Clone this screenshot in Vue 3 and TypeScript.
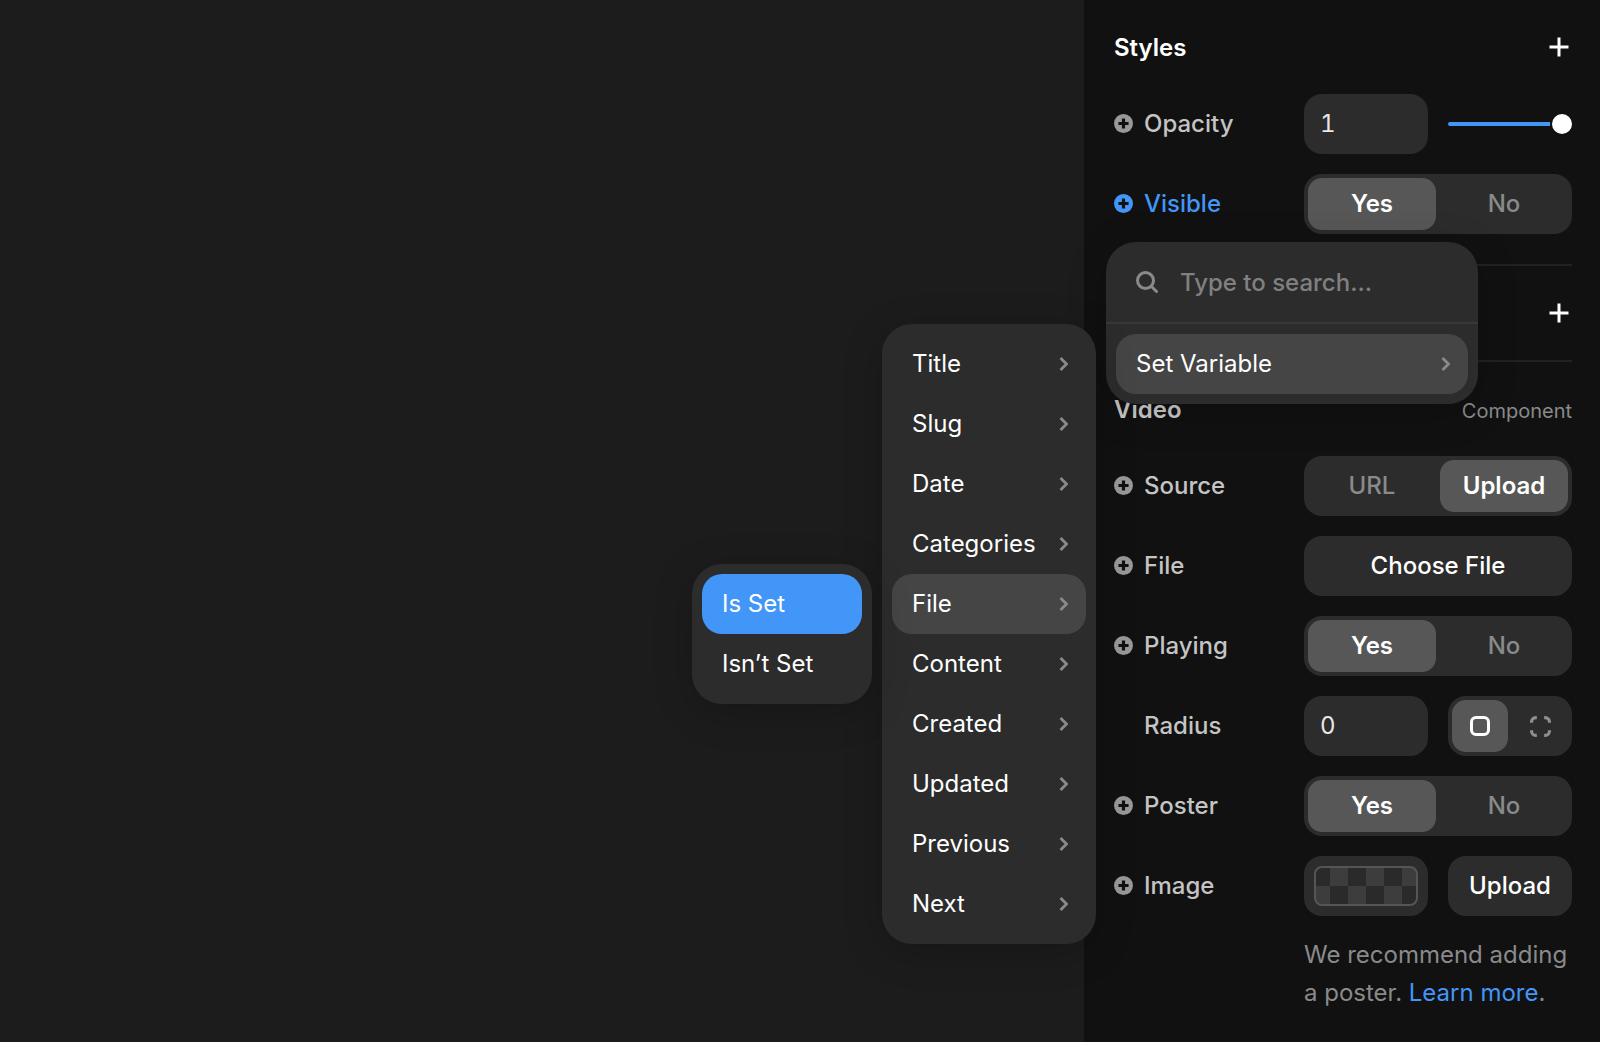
<template>
  <div class="app">
    <div class="canvas"></div>

    <aside class="panel">
      <section class="section">
        <header class="section-head">
          <h2>Styles</h2>
          <svg class="add" viewBox="0 0 20 20"><path d="M10 0.5v19M0.5 10h19" /></svg>
        </header>
        <div class="rows">
          <div class="row">
            <label class="label">
              <svg class="dot" viewBox="0 0 18 18"><circle cx="9" cy="9" r="9" /><path d="M9 4.2v9.6M4.2 9h9.6" /></svg>
              <span class="txt">Opacity</span>
            </label>
            <div class="split">
              <input class="field" value="1" />
              <div class="slider"><span class="thumb"></span></div>
            </div>
          </div>
          <div class="row blue">
            <label class="label">
              <svg class="dot" viewBox="0 0 18 18"><circle cx="9" cy="9" r="9" /><path d="M9 4.2v9.6M4.2 9h9.6" /></svg>
              <span class="txt">Visible</span>
            </label>
            <div class="segment">
              <span class="seg on">Yes</span>
              <span class="seg">No</span>
            </div>
          </div>
        </div>
      </section>

      <section class="section">
        <header class="section-head">
          <h2></h2>
          <svg class="add" viewBox="0 0 20 20"><path d="M10 0.5v19M0.5 10h19" /></svg>
        </header>
      </section>

      <section class="section">
        <header class="section-head">
          <h2>Video</h2>
          <span class="kind">Component</span>
        </header>
        <div class="rows">
          <div class="row">
            <label class="label">
              <svg class="dot" viewBox="0 0 18 18"><circle cx="9" cy="9" r="9" /><path d="M9 4.2v9.6M4.2 9h9.6" /></svg>
              <span class="txt">Source</span>
            </label>
            <div class="segment">
              <span class="seg">URL</span>
              <span class="seg on">Upload</span>
            </div>
          </div>
          <div class="row">
            <label class="label">
              <svg class="dot" viewBox="0 0 18 18"><circle cx="9" cy="9" r="9" /><path d="M9 4.2v9.6M4.2 9h9.6" /></svg>
              <span class="txt">File</span>
            </label>
            <button class="btn">Choose File</button>
          </div>
          <div class="row">
            <label class="label">
              <svg class="dot" viewBox="0 0 18 18"><circle cx="9" cy="9" r="9" /><path d="M9 4.2v9.6M4.2 9h9.6" /></svg>
              <span class="txt">Playing</span>
            </label>
            <div class="segment">
              <span class="seg on">Yes</span>
              <span class="seg">No</span>
            </div>
          </div>
          <div class="row">
            <label class="label no-dot"><span class="txt">Radius</span></label>
            <div class="split">
              <input class="field" value="0" />
              <div class="segment small">
                <span class="seg on">
                  <svg class="corner" viewBox="0 0 20 20"><rect x="1.5" y="1.5" width="17" height="17" rx="4.5" /></svg>
                </span>
                <span class="seg">
                  <svg class="corner dim" viewBox="0 0 20 20">
                    <path d="M1.5 6.5v-1a4 4 0 0 1 4-4h1M13.5 1.5h1a4 4 0 0 1 4 4v1M18.5 13.5v1a4 4 0 0 1-4 4h-1M6.5 18.5h-1a4 4 0 0 1-4-4v-1" />
                  </svg>
                </span>
              </div>
            </div>
          </div>
          <div class="row">
            <label class="label">
              <svg class="dot" viewBox="0 0 18 18"><circle cx="9" cy="9" r="9" /><path d="M9 4.2v9.6M4.2 9h9.6" /></svg>
              <span class="txt">Poster</span>
            </label>
            <div class="segment">
              <span class="seg on">Yes</span>
              <span class="seg">No</span>
            </div>
          </div>
          <div class="row">
            <label class="label">
              <svg class="dot" viewBox="0 0 18 18"><circle cx="9" cy="9" r="9" /><path d="M9 4.2v9.6M4.2 9h9.6" /></svg>
              <span class="txt">Image</span>
            </label>
            <div class="split">
              <div class="swatch"><span class="checker"></span></div>
              <button class="btn">Upload</button>
            </div>
          </div>
        </div>
        <p class="hint">We recommend adding<br />a poster. <a>Learn more</a>.</p>
      </section>
    </aside>

    <!-- 弹出菜单 -->
    <div class="popover search-pop">
      <div class="search">
        <svg class="search-icon" viewBox="0 0 22 22"><circle cx="9.5" cy="9.5" r="8" /><path d="M15.5 15.5l5 5" /></svg>
        <input placeholder="Type to search..." />
      </div>
      <div class="menu-list">
        <div class="item hover">
          <span class="txt">Set Variable</span>
          <svg class="chev" viewBox="0 0 9 14"><path d="M1.5 1L7.5 7l-6 6" /></svg>
        </div>
      </div>
    </div>

    <div class="popover field-pop menu-list">
      <div v-for="name in fields" :key="name" class="item" :class="{ hover: name === 'File' }">
        <span class="txt">{{ name }}</span>
        <svg class="chev" viewBox="0 0 9 14"><path d="M1.5 1L7.5 7l-6 6" /></svg>
      </div>
    </div>

    <div class="popover cond-pop menu-list">
      <div class="item active"><span class="txt">Is Set</span></div>
      <div class="item"><span class="txt">Isn’t Set</span></div>
    </div>
  </div>
</template>

<script setup lang="ts">
const fields: string[] = [
  'Title',
  'Slug',
  'Date',
  'Categories',
  'File',
  'Content',
  'Created',
  'Updated',
  'Previous',
  'Next'
]
</script>

<style>
html,
body {
  margin: 0;
  background: #1c1c1c;
}
</style>

<style scoped>
.app {
  position: relative;
  display: flex;
  width: 1600px;
  height: 1042px;
  overflow: hidden;
  background: #1c1c1c;
  color: #fff;
  font-family: Inter, "Liberation Sans", sans-serif;
  font-size: 24px;
}

.canvas {
  flex: 1;
}

.panel {
  width: 516px;
  box-sizing: border-box;
  padding: 0 28px 0 30px;
  background: #111;
}

.section + .section {
  border-top: 2px solid #222;
}

.section:first-child {
  padding-bottom: 30px;
}

.section-head {
  display: flex;
  align-items: center;
  justify-content: space-between;
  height: 94px;
}

.section-head h2 {
  margin: 0;
  font-size: 24px;
  font-weight: 600;
  color: #fff;
}

.section:last-child h2 {
  color: #ccc;
}

.add {
  width: 20px;
  height: 20px;
  margin: 0 3px 1px 0;
  fill: none;
  stroke: #fff;
  stroke-width: 3;
}

.kind {
  margin-top: 4px;
  font-size: 20px;
  color: #8a8a8a;
}

.rows {
  display: flex;
  flex-direction: column;
  gap: 20px;
}

.row {
  display: grid;
  grid-template-columns: 190px 268px;
  align-items: center;
  height: 60px;
}

.label {
  display: flex;
  align-items: center;
  gap: 11px;
  color: #c4c4c4;
  font-weight: 500;
}

.txt {
  margin-bottom: 2px;
}

.no-dot {
  padding-left: 30px;
}

.dot {
  flex: none;
  width: 19px;
  height: 19px;
  margin-bottom: 1px;
}

.dot circle {
  fill: #999;
}

.dot path {
  fill: none;
  stroke: #111;
  stroke-width: 3;
}

.blue .label {
  color: #4296f7;
}

.blue .dot circle {
  fill: #4296f7;
}

.split {
  display: grid;
  grid-template-columns: 124px 124px;
  gap: 20px;
  height: 60px;
}

.field {
  width: 100%;
  height: 60px;
  box-sizing: border-box;
  padding: 0 16px 2px;
  border: 0;
  border-radius: 18px;
  outline: none;
  background: #2c2c2c;
  color: #e8e8e8;
  font: inherit;
  font-variant-numeric: tabular-nums;
}

.slider {
  position: relative;
  align-self: center;
  height: 4px;
  border-radius: 2px;
  background: #4296f7;
}

.thumb {
  position: absolute;
  top: -8px;
  right: 0;
  width: 20px;
  height: 20px;
  border-radius: 50%;
  background: #fff;
  box-shadow: 0 0 0 2px #111;
}

.segment {
  display: grid;
  grid-template-columns: 1fr 1fr;
  gap: 4px;
  height: 60px;
  box-sizing: border-box;
  padding: 4px;
  border-radius: 18px;
  background: #2c2c2c;
}

.seg {
  display: flex;
  align-items: center;
  justify-content: center;
  padding-bottom: 2px;
  border-radius: 14px;
  color: #8a8a8a;
  font-weight: 500;
}

.seg.on {
  background: #575757;
  color: #fff;
  font-weight: 600;
}

.small .seg {
  padding-bottom: 0;
}

.corner {
  width: 20px;
  height: 20px;
  fill: none;
  stroke: #fff;
  stroke-width: 3;
}

.corner.dim {
  width: 21px;
  height: 21px;
  margin-left: 1px;
  stroke: #8f8f8f;
}

.btn {
  height: 60px;
  padding: 0 0 2px;
  border: 0;
  border-radius: 18px;
  background: #2c2c2c;
  color: #fff;
  font: inherit;
  font-weight: 500;
}

.swatch {
  display: flex;
  height: 60px;
  box-sizing: border-box;
  padding: 10px;
  border-radius: 18px;
  background: #2c2c2c;
}

.checker {
  flex: 1;
  border: 2px solid #555;
  border-radius: 8px;
  background-image: conic-gradient(#3d3d3d 25%, #2a2a2a 0 50%, #3d3d3d 0 75%, #2a2a2a 0);
  background-size: 36px 36px;
  background-position: -4px 0;
}

.hint {
  margin: 20px 0 0 190px;
  color: #8a8a8a;
  line-height: 38px;
}

.hint a {
  color: #4296f7;
}

.popover {
  position: absolute;
  box-sizing: border-box;
  border-radius: 30px;
  background: #2c2c2c;
  box-shadow: 0 8px 40px rgba(0, 0, 0, 0.2);
}

.search-pop {
  left: 1106px;
  top: 242px;
  width: 372px;
  height: 162px;
}

.field-pop {
  left: 882px;
  top: 324px;
  width: 214px;
}

.cond-pop {
  left: 692px;
  top: 564px;
  width: 180px;
}

.search {
  display: flex;
  align-items: center;
  gap: 22px;
  height: 82px;
  box-sizing: border-box;
  padding: 0 30px;
  border-bottom: 2px solid #383838;
}

.search-icon {
  flex: none;
  width: 22px;
  height: 22px;
  fill: none;
  stroke: #8a8a8a;
  stroke-width: 3;
  stroke-linecap: round;
}

.search input {
  flex: 1;
  min-width: 0;
  padding: 0;
  border: 0;
  outline: none;
  background: transparent;
  color: #fff;
  font: inherit;
  font-weight: 500;
}

.search input::placeholder {
  color: #808080;
  opacity: 1;
}

.menu-list {
  display: flex;
  flex-direction: column;
  padding: 10px;
}

.item {
  display: flex;
  align-items: center;
  justify-content: space-between;
  height: 60px;
  padding: 0 18px 0 20px;
  border-radius: 20px;
  color: #fff;
}

.item.hover {
  background: #454545;
}

.item.active {
  background: #4296f7;
}

.chev {
  width: 9px;
  height: 14px;
  fill: none;
  stroke: #8a8a8a;
  stroke-width: 2.8;
}
</style>
